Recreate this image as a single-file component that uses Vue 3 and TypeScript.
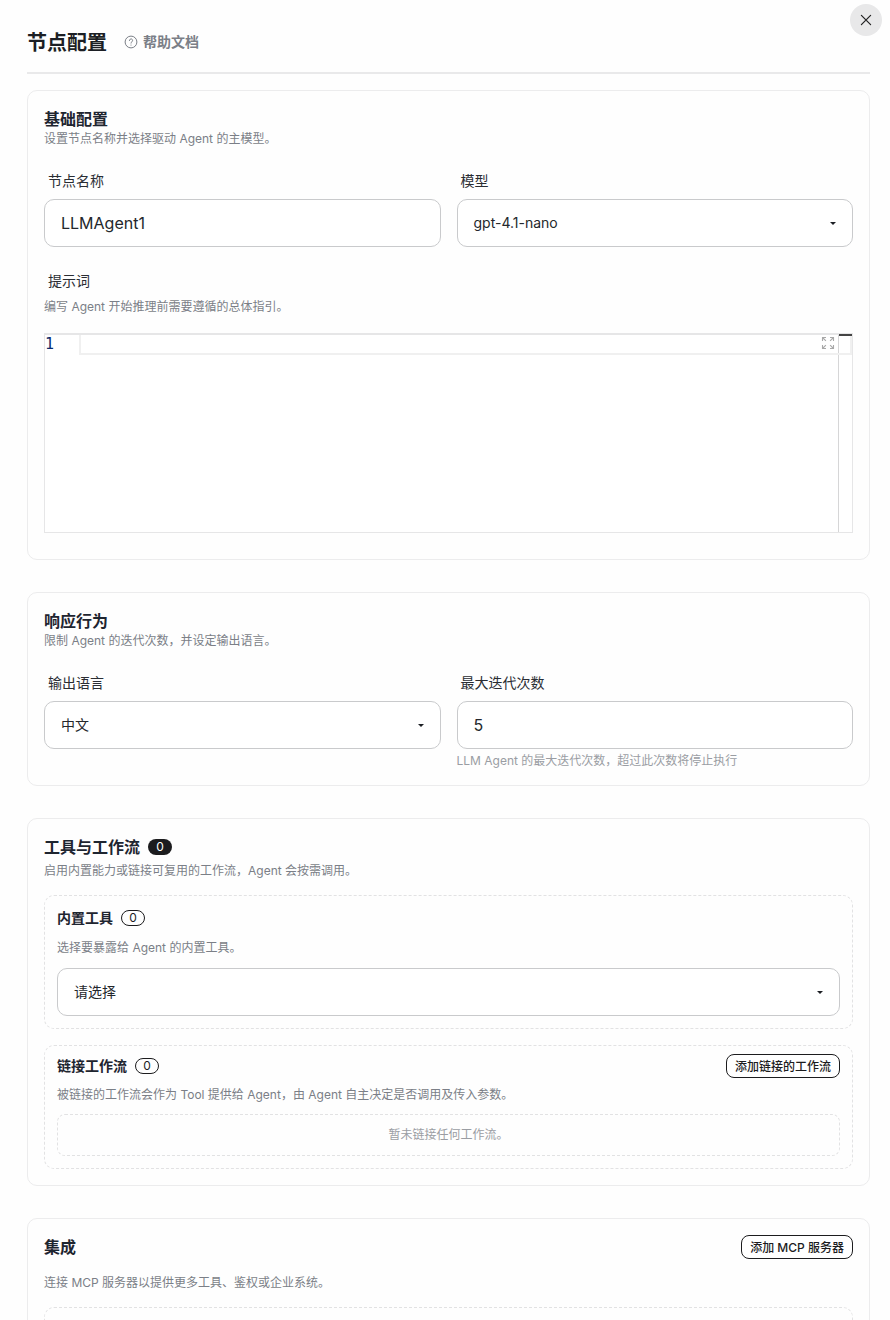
<script setup lang="ts">
const title = '节点配置'
</script>

<template>
  <div class="page">
    <button class="close" aria-label="关闭">
      <svg width="14" height="14" viewBox="0 0 14 14" fill="none"><path d="M2.400 2.400 11.600 11.600M11.600 2.400 2.400 11.600" stroke="#222" stroke-width="1.2" stroke-linecap="round"/></svg>
    </button>
    <header class="head">
      <h1>{{ title }}</h1>
      <a class="help">
        <svg width="14" height="14" viewBox="0 0 14 14" fill="none"><circle cx="7" cy="7" r="5.9" stroke="#7b7f87" stroke-width="1"/><path d="M5.400 5.500a1.600 1.600 0 1 1 2.500 1.300c-.6.4-.9.7-.9 1.300" stroke="#7b7f87" stroke-width="1" stroke-linecap="round"/><circle cx="7" cy="10" r=".6" fill="#7b7f87"/></svg>
        <span class="help-text">帮助文档</span>
      </a>
    </header>

    <section class="card c1">
      <h2>基础配置</h2>
      <p class="sub">设置节点名称并选择驱动 Agent 的主模型。</p>
      <div class="grid">
        <div>
          <label>节点名称</label>
          <div class="field big">LLMAgent1</div>
        </div>
        <div>
          <label>模型</label>
          <div class="field sel"><span class="val">gpt-4.1-nano</span><i class="caret"></i></div>
        </div>
      </div>
      <label class="l2">提示词</label>
      <p class="desc">编写 Agent 开始推理前需要遵循的总体指引。</p>
      <div class="editor">
        <div class="gutter"><span>1</span></div>
        <div class="code">
          <div class="active">
            <svg class="expand" width="14" height="14" viewBox="0 0 14 14" fill="none" stroke="#a9a9a9" stroke-width="1.1"><path d="M1.500 5V1.500H5M1.500 1.500l3.400 3.400M9 1.500h3.500V5M12.500 1.500 9.100 4.900M1.500 9v3.500H5M1.500 12.500l3.400-3.400M12.500 9v3.500H9M12.500 12.500 9.100 9.100"/></svg>
          </div>
        </div>
        <div class="mini"><b></b></div>
      </div>
    </section>

    <section class="card c2">
      <h2>响应行为</h2>
      <p class="sub">限制 Agent 的迭代次数，并设定输出语言。</p>
      <div class="grid">
        <div>
          <label>输出语言</label>
          <div class="field sel"><span class="val">中文</span><i class="caret"></i></div>
        </div>
        <div>
          <label>最大迭代次数</label>
          <div class="field big">5</div>
          <p class="hint">LLM Agent 的最大迭代次数，超过此次数将停止执行</p>
        </div>
      </div>
    </section>

    <section class="card c3">
      <div class="tt">
        <h2>工具与工作流</h2>
        <span class="badge solid">0</span>
      </div>
      <p class="sub s3">启用内置能力或链接可复用的工作流，Agent 会按需调用。</p>
      <div class="box b1">
        <div class="tt small">
          <h3>内置工具</h3>
          <span class="badge line">0</span>
        </div>
        <p class="desc d1">选择要暴露给 Agent 的内置工具。</p>
        <div class="field sel"><span class="val">请选择</span><i class="caret"></i></div>
      </div>
      <div class="box b2">
        <div class="row">
          <div class="tt small">
            <h3>链接工作流</h3>
            <span class="badge line">0</span>
          </div>
          <button class="btn">添加链接的工作流</button>
        </div>
        <p class="desc d2">被链接的工作流会作为 Tool 提供给 Agent，由 Agent 自主决定是否调用及传入参数。</p>
        <div class="empty">暂未链接任何工作流。</div>
      </div>
    </section>

    <section class="card c4">
      <div class="row r4">
        <h2>集成</h2>
        <button class="btn">添加 MCP 服务器</button>
      </div>
      <p class="desc d4">连接 MCP 服务器以提供更多工具、鉴权或企业系统。</p>
      <div class="box b4"></div>
    </section>
  </div>
</template>

<style>
html, body { margin: 0; background: #fefefe; overflow: hidden; }
</style>

<style scoped>
.page {
  position: relative;
  width: 890px;
  height: 1320px;
  overflow: hidden;
  box-sizing: border-box;
  padding: 0 20px 0 27px;
  background: #fefefe;
  font-family: Inter, "Noto Sans CJK SC", sans-serif;
  color: #1f2329;
}
.close {
  position: absolute;
  top: 4px;
  left: 850px;
  width: 32px;
  height: 32px;
  padding: 0;
  border: 0;
  border-radius: 50%;
  background: #e8e8e9;
  display: flex;
  align-items: center;
  justify-content: center;
}
.head {
  box-sizing: border-box;
  border-bottom: 2px solid #e9e9ea;
  height: 74px;
  padding-top: 28px;
  display: flex;
  align-items: flex-start;
  gap: 17px;
}
h1 {
  margin: 1px 0 0;
  font-size: 20px;
  line-height: 28px;
  font-weight: 700;
  color: #1c1f24;
}
.help {
  display: flex;
  align-items: center;
  gap: 5px;
  height: 28px;
  font-size: 14px;
  font-weight: 600;
  color: #7b7f87;
}
.help-text { margin-top: -2px; }
.card {
  box-sizing: border-box;
  border: 1px solid #ececed;
  border-radius: 10px;
  padding: 0 16px;
  background: #fefefe;
}
.c1 { margin-top: 16px; height: 470px; padding-top: 18px; }
.c2 { margin-top: 32px; height: 194px; padding-top: 18px; }
.c3 { margin-top: 32px; height: 368px; padding-top: 18px; }
.c4 { margin-top: 32px; height: 140px; padding-top: 16px; }
h2 {
  margin: 0;
  font-size: 16px;
  line-height: 20px;
  font-weight: 700;
  color: #1e2530;
}
h3 {
  margin: 0;
  font-size: 14px;
  line-height: 20px;
  font-weight: 600;
  color: #1e2530;
}
.sub {
  margin: 0;
  font-size: 12px;
  line-height: 20px;
  color: #7b7f87;
}
.grid {
  display: grid;
  grid-template-columns: 1fr 1fr;
  gap: 16px;
  margin-top: 22px;
}
label {
  display: block;
  height: 20px;
  line-height: 20px;
  margin-bottom: 8px;
  padding-left: 4px;
  font-size: 14px;
  color: #2a2d33;
}
.field {
  box-sizing: border-box;
  height: 48px;
  border: 1px solid #c9cacc;
  border-radius: 10px;
  background: #fff;
  padding: 0 16px;
  display: flex;
  align-items: center;
  justify-content: space-between;
  font-size: 14px;
  color: #24272c;
}
.field.big { font-size: 16px; }
.val { margin-top: -2px; }
.caret {
  width: 0;
  height: 0;
  border-left: 3.5px solid transparent;
  border-right: 3.5px solid transparent;
  border-top: 3.5px solid #1c1f24;
}
.l2 { margin-top: 24px; margin-bottom: 0; }
.desc {
  margin: 0;
  font-size: 12px;
  line-height: 20px;
  color: #7b7f87;
}
.c1 .desc { margin-top: 6px; }
.editor {
  margin-top: 16px;
  height: 200px;
  box-sizing: border-box;
  border: 1px solid #e6e6e7;
  border-top-width: 2px;
  display: flex;
  background: #fff;
}
.gutter {
  width: 34px;
  flex: none;
  font-family: "DejaVu Sans Mono", "Liberation Mono", monospace;
  font-size: 15px;
  line-height: 19px;
  color: #0b2a6b;
}
.code { flex: 1; min-width: 0; }
.active {
  position: relative;
  height: 20px;
  box-sizing: border-box;
  border: 2px solid #f0f0f0;
  border-top-width: 0;
  margin-right: -14px;
  z-index: 1;
}
.expand { position: absolute; right: 15px; top: 1px; }
.mini {
  width: 14px;
  flex: none;
  box-sizing: border-box;
  border-left: 1px solid #d6d6d7;
}
.mini b { display: block; height: 2px; background: #444; margin-top: -1px; position: relative; z-index: 2; }
.hint {
  margin: 2px 0 0;
  font-size: 12px;
  line-height: 20px;
  color: #9a9da3;
}
.tt { display: flex; align-items: center; gap: 8px; }
.s3 { margin-top: 4px; }
.badge {
  box-sizing: border-box;
  display: inline-flex;
  align-items: center;
  justify-content: center;
  width: 24px;
  height: 16px;
  border-radius: 8px;
  font-size: 12px;
  line-height: 14px;
}
.solid { background: #1c1c1e; color: #fff; }
.line { border: 1px solid #1c1c1e; color: #1c1c1e; }
.box {
  box-sizing: border-box;
  border: 1px dashed #e2e2e3;
  border-radius: 10px;
  padding: 0 12px;
}
.b1 { margin-top: 14px; height: 134px; padding-top: 12px; }
.b2 { margin-top: 16px; height: 124px; padding-top: 8px; }
.small { height: 20px; }
.d1 { margin-top: 10px; margin-bottom: 10px; }
.row { display: flex; align-items: center; justify-content: space-between; }
.b2 .row { height: 24px; }
.d2 { margin-top: 7px; }
.btn {
  box-sizing: border-box;
  height: 24px;
  padding: 0 8px 2px;
  border: 1px solid #1c1c1e;
  border-radius: 8px;
  background: #fff;
  font-family: inherit;
  font-size: 12px;
  font-weight: 500;
  color: #1c1c1e;
}
.empty {
  box-sizing: border-box;
  margin-top: 9px;
  height: 42px;
  padding-bottom: 3px;
  border: 1px dashed #e2e2e3;
  border-radius: 8px;
  display: flex;
  align-items: center;
  justify-content: center;
  font-size: 12px;
  color: #9a9da3;
}
.r4 { height: 24px; }
.d4 { margin-top: 14px; }
.b4 { margin-top: 14px; height: 60px; }
</style>
